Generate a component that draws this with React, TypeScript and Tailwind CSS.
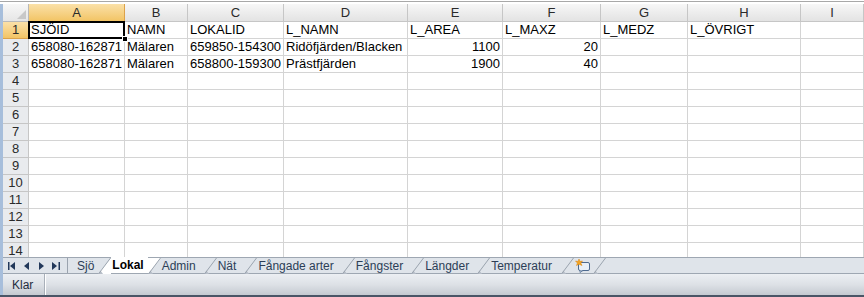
import React from "react";

const cols = [
  { key: "A", w: "w-[96px]" },
  { key: "B", w: "w-[63px]" },
  { key: "C", w: "w-[96px]" },
  { key: "D", w: "w-[124px]" },
  { key: "E", w: "w-[95px]" },
  { key: "F", w: "w-[98px]" },
  { key: "G", w: "w-[87px]" },
  { key: "H", w: "w-[113px]" },
  { key: "I", w: "flex-1" },
];

type Cell = { v: string; num?: boolean };

const data: Cell[][] = [
  [{ v: "SJÖID" }, { v: "NAMN" }, { v: "LOKALID" }, { v: "L_NAMN" }, { v: "L_AREA" }, { v: "L_MAXZ" }, { v: "L_MEDZ" }, { v: "L_ÖVRIGT" }],
  [{ v: "658080-162871" }, { v: "Mälaren" }, { v: "659850-154300" }, { v: "Ridöfjärden/Blacken" }, { v: "1100", num: true }, { v: "20", num: true }],
  [{ v: "658080-162871" }, { v: "Mälaren" }, { v: "658800-159300" }, { v: "Prästfjärden" }, { v: "1900", num: true }, { v: "40", num: true }],
];

const rows = Array.from({ length: 14 }, (_, i) => i + 1);

function Slant({ fill }: { fill?: "left" | "right" }) {
  return (
    <svg width="13" height="16" viewBox="0 0 13 16" className="shrink-0">
      {fill === "left" && <polygon points="0,0 13,0 0,16" fill="#ffffff" />}
      {fill === "right" && <polygon points="13,0 13,16 0,16" fill="#ffffff" />}
      <polygon points="0,16 5,16 2.5,12.5" fill="#b7bec8" />
      <line x1="0.5" y1="16" x2="12.5" y2="0" stroke="#9aa3ae" strokeWidth="1" />
    </svg>
  );
}

function NavIcons() {
  return (
    <div className="flex items-center w-[61px] pl-[5px] gap-[8px]">
      <svg width="8" height="8" viewBox="0 0 8 8">
        <rect x="0" y="0" width="1.5" height="8" fill="#22385a" />
        <polygon points="7,0 7,8 2,4" fill="#22385a" />
      </svg>
      <svg width="6" height="8" viewBox="0 0 6 8">
        <polygon points="5,0 5,8 0,4" fill="#22385a" />
      </svg>
      <svg width="6" height="8" viewBox="0 0 6 8">
        <polygon points="1,0 1,8 6,4" fill="#22385a" />
      </svg>
      <svg width="8" height="8" viewBox="0 0 8 8">
        <polygon points="0,0 0,8 5,4" fill="#22385a" />
        <rect x="6.5" y="0" width="1.5" height="8" fill="#22385a" />
      </svg>
    </div>
  );
}

function NewSheetIcon() {
  return (
    <svg width="16" height="14" viewBox="0 0 16 14">
      <rect x="3.5" y="3.5" width="11" height="8" rx="1.5" fill="#e9f0f8" stroke="#4e6a8f" />
      <path d="M5 11.5 L5 13.5 L8 11.5" fill="#e9f0f8" stroke="#4e6a8f" strokeWidth="0.8" />
      <polygon points="4,0 5,2.5 7.5,2 5.8,4 7,6.5 4,5.2 1.5,6.5 2.4,4 0.5,2 3,2.5" fill="#f4a522" stroke="#d98310" strokeWidth="0.5" />
    </svg>
  );
}

export default function App() {
  return (
    <div className="w-[864px] h-[297px] overflow-hidden bg-white flex flex-col [font-family:'Liberation_Sans',Arial,sans-serif]">
      <div className="h-[4px] bg-white pt-[1px]">
        <div className="h-[1px] bg-[#a8a8a8]" />
      </div>
      <div className="flex flex-1 min-h-0">
        <div className="w-[3px] bg-[#a7bedb]" />
        <div className="flex-1 flex flex-col min-w-0">
          {/* Grid */}
          <div className="h-[253px] overflow-hidden">
            <div className="flex h-[18px] text-[13px] text-[#2a2a2a]">
              <div className="w-[26px] shrink-0 border-r border-b border-[#b9b9b9] bg-linear-to-b from-[#f7f7f7] to-[#e6e6e6] flex items-end justify-end p-[2px]">
                <svg width="9" height="9" viewBox="0 0 9 9">
                  <polygon points="9,0 9,9 0,9" fill="#c8c8c8" />
                </svg>
              </div>
              {cols.map((c) => (
                <div
                  key={c.key}
                  className={`${c.w} shrink-0 flex items-center justify-center border-r border-b ${
                    c.key === "A"
                      ? "bg-linear-to-b from-[#fbe1a8] to-[#f2c464] border-[#dca24a]"
                      : "bg-linear-to-b from-[#f7f7f7] to-[#e3e3e3] border-[#c6c6c6]"
                  }`}
                >
                  {c.key}
                </div>
              ))}
            </div>
            {rows.map((r) => (
              <div key={r} className="flex h-[17px] text-[13px] leading-[16px]">
                <div
                  className={`w-[26px] shrink-0 flex items-center justify-center border-r border-b text-[#2a2a2a] ${
                    r === 1
                      ? "bg-linear-to-b from-[#fbe1a8] to-[#f2c464] border-[#dca24a]"
                      : "bg-[#e9ebee] border-[#c6c6c6]"
                  }`}
                >
                  {r}
                </div>
                {cols.map((c, ci) => {
                  const cell = data[r - 1]?.[ci];
                  const selected = r === 1 && ci === 0;
                  return (
                    <div
                      key={c.key}
                      className={`${c.w} shrink-0 relative border-r border-b border-[#d4d4d4] px-[2px] whitespace-nowrap overflow-visible text-black ${
                        cell?.num ? "text-right" : "text-left"
                      }`}
                    >
                      {cell?.v}
                      {selected && (
                        <>
                          <div className="absolute -left-[1px] -top-[1px] -right-[1px] -bottom-[1px] border-2 border-black pointer-events-none" />
                          <div className="absolute -right-[4px] -bottom-[4px] w-[6px] h-[6px] bg-black border border-white z-10" />
                        </>
                      )}
                    </div>
                  );
                })}
              </div>
            ))}
          </div>

          {/* Sheet tabs */}
          <div className="h-[17px] flex items-stretch bg-[#dfe4ea] border-t border-b border-[#9ea7b2] text-[12px] text-[#2c3e57]">
            <NavIcons />
            <div className="flex items-stretch">
              <div className="ml-[3px] border-l border-[#9aa3ae] pl-[9px] pr-[4px] flex items-center">Sjö</div>
              <Slant fill="right" />
              <div className="bg-white pl-[1px] pr-[4px] flex items-center font-bold text-black -mt-[1px]">Lokal</div>
              <Slant fill="left" />
              <div className="pl-[1px] pr-[8px] flex items-center">Admin</div>
              <Slant />
              <div className="pl-[1px] pr-[8px] flex items-center">Nät</div>
              <Slant />
              <div className="pl-[1px] pr-[8px] flex items-center">Fångade arter</div>
              <Slant />
              <div className="pl-[1px] pr-[8px] flex items-center">Fångster</div>
              <Slant />
              <div className="pl-[1px] pr-[8px] flex items-center">Längder</div>
              <Slant />
              <div className="pl-[1px] pr-[9px] flex items-center">Temperatur</div>
              <Slant />
              <div className="pl-[1px] pr-[2px] flex items-center">
                <NewSheetIcon />
              </div>
              <Slant />
            </div>
          </div>

          {/* Status bar */}
          <div className="h-[21px] flex items-center bg-linear-to-b from-[#eceff3] via-[#dde1e6] to-[#c5cad1] text-[12px] text-[#1f2d40]">
            <div className="w-[42px] pl-[9px] h-full flex items-center border-r border-[#a9b0b9]">Klar</div>
            <div className="w-[1px] h-full bg-white" />
          </div>
        </div>
      </div>
      <div className="h-[2px] bg-[#4a5566]" />
    </div>
  );
}
